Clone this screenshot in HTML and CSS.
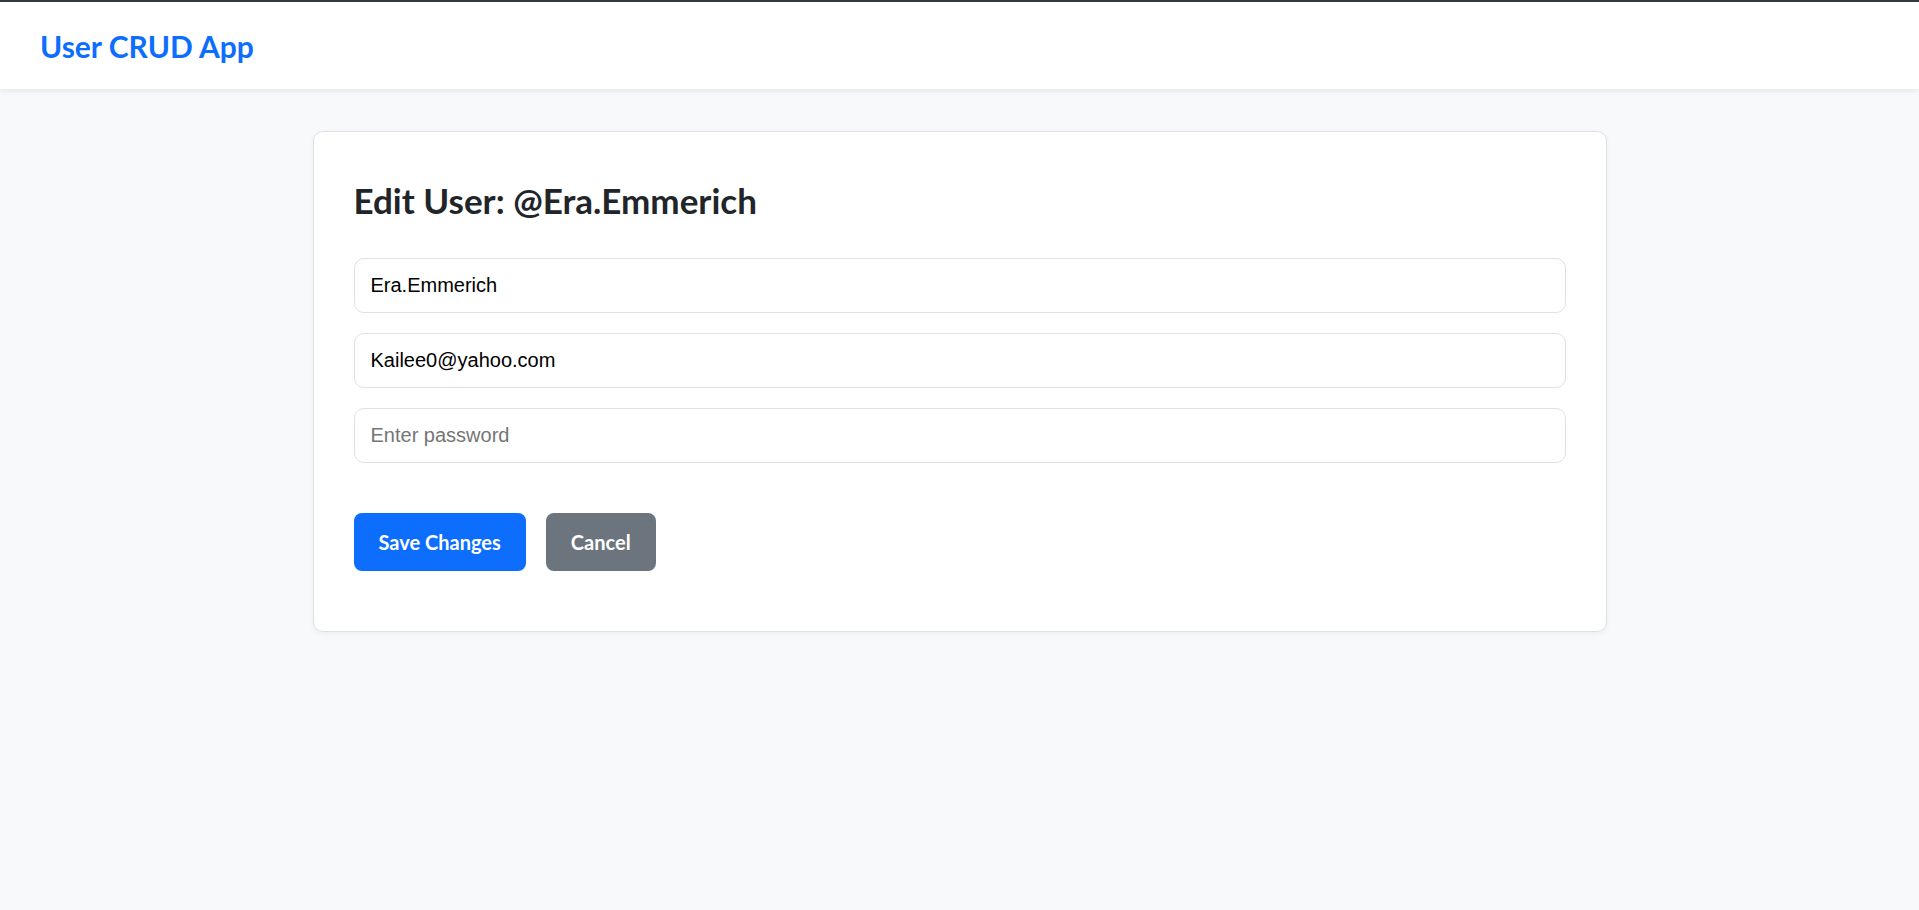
FILE: index.html
```html
<!DOCTYPE html>
<html lang="en">
<head>
<meta charset="utf-8">
<title>User CRUD App</title>
<link rel="stylesheet" href="styles.css">
</head>
<body>
<header class="topbar">
  <a class="brand" href="#">User CRUD App</a>
</header>
<main class="container">
  <section class="card">
    <h2 class="card-title">Edit User: @Era.Emmerich</h2>
    <form class="form">
      <div class="fields">
        <input class="field" type="text" value="Era.Emmerich">
        <input class="field" type="email" value="Kailee0@yahoo.com">
        <input class="field" type="password" placeholder="Enter password">
      </div>
      <div class="actions">
        <button type="button" class="btn btn-primary">Save Changes</button>
        <button type="button" class="btn btn-secondary">Cancel</button>
      </div>
    </form>
  </section>
</main>
</body>
</html>
```
FILE: styles.css
```css
* { box-sizing: border-box; }
html, body { margin: 0; padding: 0; }
body {
  background: #f8f9fa;
  font-family: Lato, "Liberation Sans", sans-serif;
  color: #212529;
  min-height: 910px;
  border-top: 2px solid #2f3a44;
}
.topbar {
  height: 87px;
  background: #fff;
  display: flex;
  align-items: center;
  padding-left: 40px;
  box-shadow: 0 2px 6px rgba(0, 0, 0, 0.08);
  position: relative;
}
.brand {
  color: #0d6efd;
  font-weight: 700;
  font-size: 30px;
  text-decoration: none;
}
.container {
  width: 1294px;
  margin: 42px auto 0;
}
.card {
  background: #fff;
  border: 1px solid #dee2e6;
  border-radius: 10px;
  padding: 40px;
  box-shadow: 0 2px 6px rgba(0, 0, 0, 0.05);
}
.card-title {
  margin: 7px 0 36px;
  font-size: 35px;
  font-weight: 700;
  line-height: 1.23;
  color: #212529;
}
.fields {
  display: flex;
  flex-direction: column;
  gap: 20px;
}
.field {
  display: block;
  width: 100%;
  height: 55px;
  padding: 0 16px;
  border: 1px solid #dee2e6;
  border-radius: 10px;
  font-family: "Liberation Sans", Arial, sans-serif;
  font-size: 20px;
  color: #000;
  background: #fff;
  outline: none;
}
.field::placeholder { color: #757575; }
.actions {
  display: flex;
  gap: 20px;
  margin-top: 50px;
  margin-bottom: 20px;
}
.btn {
  height: 58px;
  padding: 0 25px;
  border: none;
  border-radius: 8px;
  font-family: Lato, "Liberation Sans", sans-serif;
  font-weight: 700;
  font-size: 20px;
  color: #fff;
  cursor: pointer;
}
.btn-primary { background: #0d6efd; }
.btn-secondary { background: #6c757d; }
```
